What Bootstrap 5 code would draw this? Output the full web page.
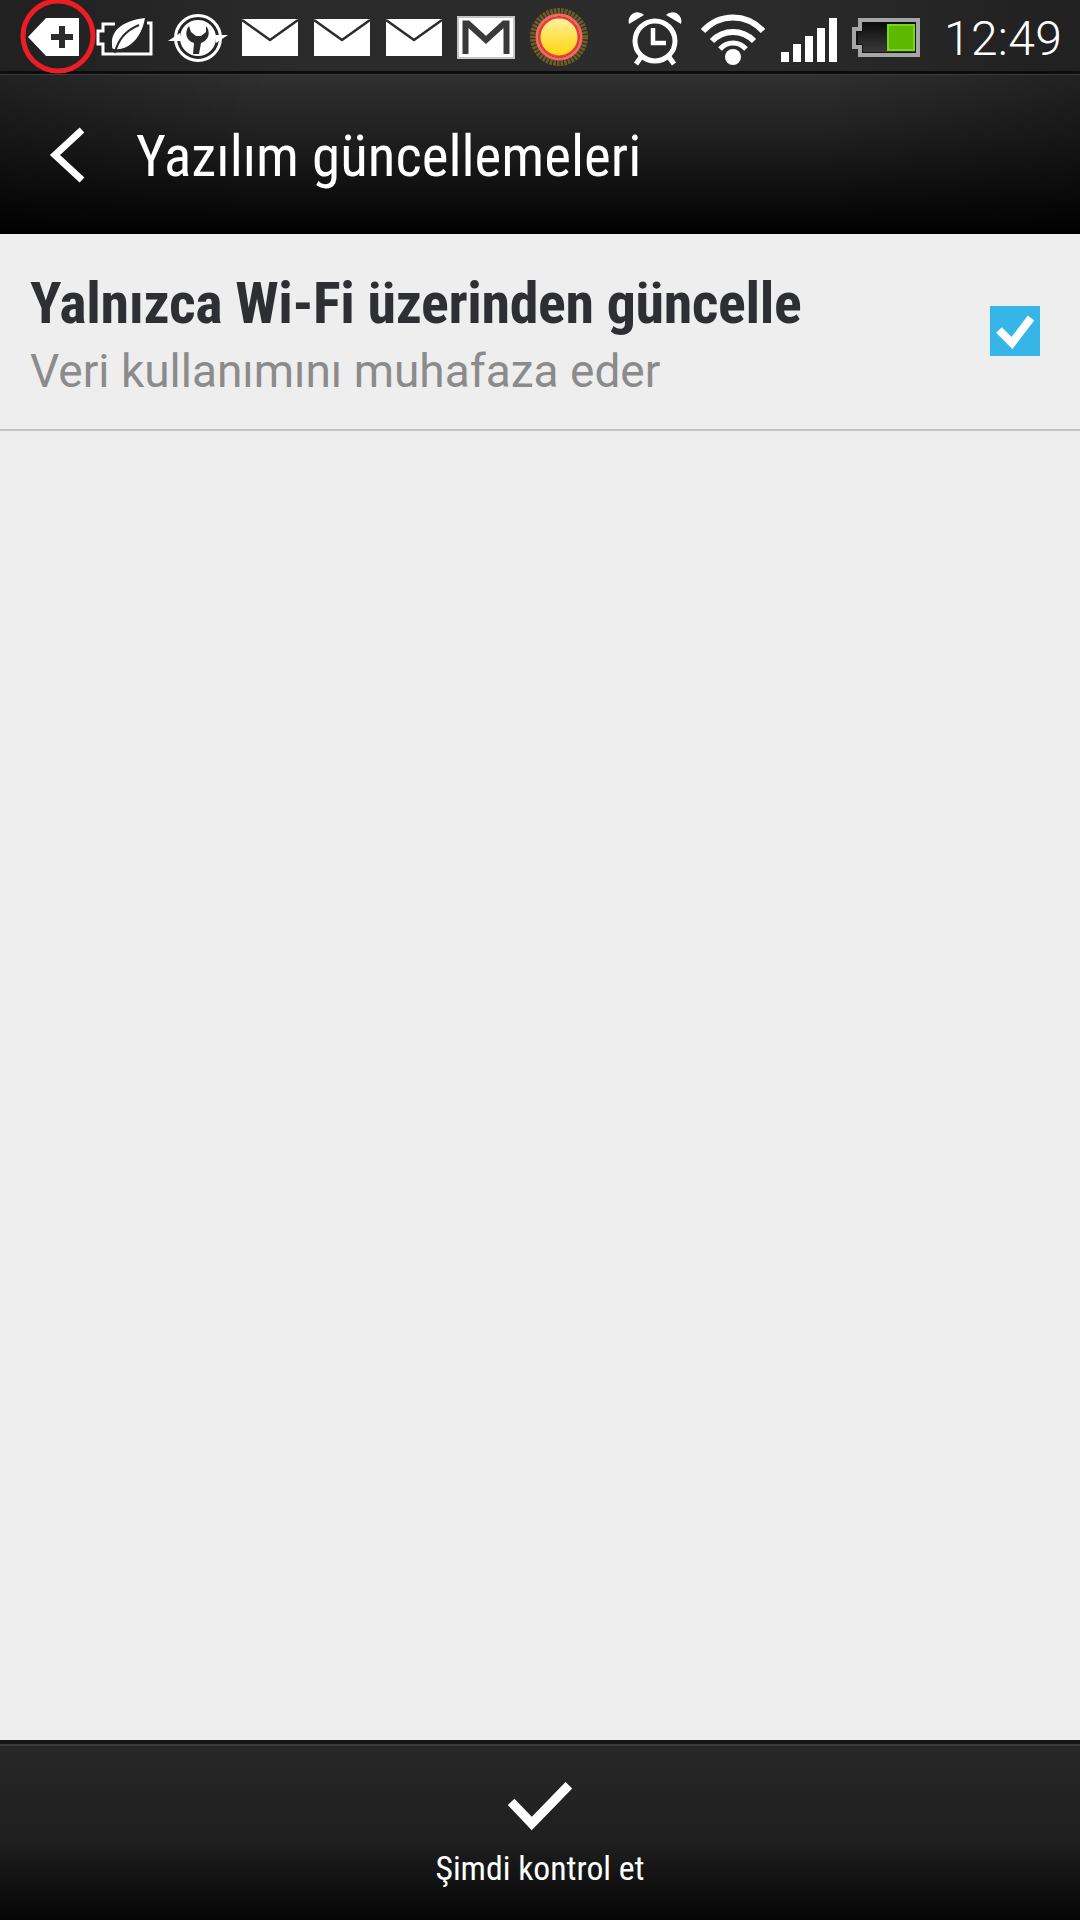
<!DOCTYPE html>
<html lang="en">
<head>
<meta charset="UTF-8">
<title>Yazılım güncellemeleri</title>
<link href="https://cdn.jsdelivr.net/npm/bootstrap@5.3.0/dist/css/bootstrap.min.css" rel="stylesheet">
<style>
    html, body { height: 100%; }
    body {
        width: 1080px;
        height: 1920px;
        overflow: hidden;
        background: #eeeeee;
        font-family: Roboto, "Liberation Sans", sans-serif;
        font-stretch: 75%;
    }
    .status-strip {
        height: 74px;
        flex: none;
        background: linear-gradient(90deg, rgba(0,0,0,.25), rgba(0,0,0,0) 30%, rgba(0,0,0,0) 70%, rgba(0,0,0,.25)), #2b2b2b;
        border-bottom: 3px solid #0c0c0c;
    }
    .status-strip svg { position: absolute; overflow: visible; }
    .clock-text {
        position: absolute;
        left: 944px;
        top: 12px;
        font-size: 48px;
        line-height: 54px;
        font-weight: 300;
        font-stretch: 100%;
        letter-spacing: .3px;
        color: #fff;
    }
    .title-strip {
        height: 160px;
        flex: none;
        padding-left: 49px;
        border-top: 1px solid #3c3c3c;
        background: linear-gradient(90deg, rgba(0,0,0,.3), rgba(0,0,0,0) 25%, rgba(0,0,0,0) 75%, rgba(0,0,0,.3)), linear-gradient(180deg, #303030 0%, #1f1f1f 40%, #060606 90%, #000 100%);
    }
    .title-text {
        margin-left: 50px;
        font-size: 57px;
        color: #fff;
        line-height: 1;
        padding-top: 4px;
        white-space: nowrap;
    }
    .pref-row {
        height: 197px;
        flex: none;
        padding: 36px 32px 0 30px;
        border-bottom: 2px solid #c2c2c2;
    }
    .pref-name {
        font-size: 58px;
        line-height: 66px;
        font-weight: 700;
        letter-spacing: -.37px;
        color: #2e2f32;
        white-space: nowrap;
    }
    .pref-desc {
        font-size: 46px;
        line-height: 58px;
        margin-top: 6px;
        font-stretch: 100%;
        color: #8b8b8b;
        white-space: nowrap;
    }
    .tick-box {
        width: 50px;
        height: 50px;
        margin-top: 36px;
        margin-right: 8px;
        background: #35b5e8;
    }
    .action-strip {
        height: 180px;
        flex: none;
        border-top: 4px solid #151515;
        background: linear-gradient(180deg, #3a3a3a 0, #3a3a3a 2px, #272727 2px, #1f1f1f 55%, #050505 100%);
    }
    .action-text {
        font-size: 33.7px;
        line-height: 40px;
        color: #fff;
        margin-top: 17px;
        margin-bottom: 31px;
    }
</style>
</head>
<body class="d-flex flex-column">

<!-- status bar -->
<div class="status-strip position-relative">
    <!-- add tag -->
    <svg style="left:0;top:0" width="120" height="74" viewBox="0 0 120 74">
        <path d="M28 37 L46 18 H79 V56 H46 Z" fill="#fff"/>
        <path d="M51 37 H73 M62 26 V48" stroke="#2b2b2b" stroke-width="6" fill="none"/>
        <circle cx="58" cy="36" r="35" fill="none" stroke="#ee1c25" stroke-width="5"/>
    </svg>
    <!-- battery saver leaf -->
    <svg style="left:97px;top:18px" width="58" height="38" viewBox="0 0 58 38">
        <path d="M18 6 H6 V13 H1 V26 H6 V36 H54 V5 H50" fill="none" stroke="#fff" stroke-width="3"/>
        <path d="M48 0 C30 2 14 10 15 26 C15 29 15 31 17 31 C30 33 44 22 48 0 Z" fill="#fff"/>
        <path d="M42 7 C30 12 21 20 18 35" fill="none" stroke="#2b2b2b" stroke-width="2"/>
    </svg>
    <!-- update wrench -->
    <svg style="left:168px;top:14px" width="60" height="48" viewBox="0 0 60 48">
        <circle cx="30" cy="24" r="22.5" fill="none" stroke="#fff" stroke-width="3"/>
        <path d="M0 27 L12 19 L13 27 Z M60 21 L48 29 L47 21 Z" fill="#fff"/>
        <circle cx="30" cy="24" r="18" fill="#fff"/>
        <path d="M21 12 C16 18 18 27 26 29 L25 40 H31 L33 29 C41 26 43 18 38 12 V18 L33 22 H28 L23 18 Z" fill="#2b2b2b"/>
    </svg>
    <!-- mail x3 -->
    <svg style="left:242px;top:19px" width="56" height="37" viewBox="0 0 56 37">
        <path d="M0 0 H56 V37 H0 Z" fill="#fff"/><path d="M0 1 L28 21 L56 1" fill="none" stroke="#2b2b2b" stroke-width="2.5"/>
    </svg>
    <svg style="left:314px;top:19px" width="56" height="37" viewBox="0 0 56 37">
        <path d="M0 0 H56 V37 H0 Z" fill="#fff"/><path d="M0 1 L28 21 L56 1" fill="none" stroke="#2b2b2b" stroke-width="2.5"/>
    </svg>
    <svg style="left:386px;top:19px" width="56" height="37" viewBox="0 0 56 37">
        <path d="M0 0 H56 V37 H0 Z" fill="#fff"/><path d="M0 1 L28 21 L56 1" fill="none" stroke="#2b2b2b" stroke-width="2.5"/>
    </svg>
    <!-- gmail -->
    <svg style="left:457px;top:16px" width="58" height="43" viewBox="0 0 58 43">
        <rect x="1" y="1" width="56" height="41" fill="#fff" stroke="#c4c4c4" stroke-width="2"/>
        <path d="M8.5 38 V7.5 H11 L29 24 L47 7.5 H49.5 V38" fill="none" stroke="#3a3a3a" stroke-width="6"/>
    </svg>
    <!-- weather sun -->
    <svg style="left:530px;top:8px" width="58" height="58" viewBox="0 0 58 58">
        <defs>
            <linearGradient id="sunFill" x1="0" y1="0" x2="0" y2="1">
                <stop offset="0" stop-color="#fff2a0"/>
                <stop offset="0.55" stop-color="#ffe04a"/>
                <stop offset="1" stop-color="#ffd80c"/>
            </linearGradient>
        </defs>
        <circle cx="29" cy="29" r="25" fill="none" stroke="#6f5c22" stroke-width="8" stroke-dasharray="2.5 1"/>
        <circle cx="29" cy="29" r="22" fill="none" stroke="#ef6a6a" stroke-width="3"/>
        <circle cx="29" cy="29" r="19.5" fill="url(#sunFill)" stroke="#f23a32" stroke-width="2"/>
    </svg>
    <!-- alarm -->
    <svg style="left:628px;top:11px" width="54" height="54" viewBox="0 0 54 54">
        <circle cx="27" cy="30" r="20" fill="none" stroke="#fff" stroke-width="5"/>
        <path d="M1 13 A9 9 0 0 1 16 4 Z M53 13 A9 9 0 0 0 38 4 Z" fill="#fff"/>
        <path d="M13 46 L8 53 M41 46 L46 53" stroke="#fff" stroke-width="5" fill="none"/>
        <path d="M25 17 V32 H38" fill="none" stroke="#fff" stroke-width="4.5"/>
    </svg>
    <!-- wifi -->
    <svg style="left:700px;top:11px" width="66" height="54" viewBox="0 0 66 54">
        <path d="M3 20 C20 2 46 2 63 20" fill="none" stroke="#fff" stroke-width="6"/>
        <path d="M12 30 C24 18 42 18 54 30" fill="none" stroke="#fff" stroke-width="6"/>
        <path d="M20 38 C27 30 39 30 46 38" fill="none" stroke="#fff" stroke-width="5"/>
        <circle cx="33" cy="46" r="8" fill="#fff"/>
    </svg>
    <!-- signal -->
    <svg style="left:782px;top:18px" width="56" height="44" viewBox="0 0 56 44">
        <path d="M0 34 H8 V44 H0 Z M12 26 H20 V44 H12 Z M24 18 H32 V44 H24 Z M36 10 H44 V44 H36 Z M48 0 H56 V44 H48 Z" fill="#fff" transform="translate(-1 0)"/>
    </svg>
    <!-- battery -->
    <svg style="left:852px;top:18px" width="68" height="39" viewBox="0 0 68 39">
        <defs>
            <linearGradient id="cellFill" x1="0" y1="0" x2="0" y2="1">
                <stop offset="0" stop-color="#0c0c0c"/>
                <stop offset="1" stop-color="#3a3a3a"/>
            </linearGradient>
        </defs>
        <path d="M8 2 H66 V37 H8 V29 H2 V11 H8 Z" fill="#111" stroke="#a6a6a6" stroke-width="4"/>
        <path d="M11 5 H63 V34 H11 V26 H6 V14 H11 Z" fill="url(#cellFill)"/>
        <rect x="36" y="7" width="26" height="25" fill="#5cb800" stroke="#7ad61a" stroke-width="2"/>
    </svg>
    <span class="clock-text">12:49</span>
</div>

<!-- title -->
<div class="title-strip d-flex align-items-center">
    <svg width="37" height="56" viewBox="0 0 37 56">
        <path d="M33 3 L6 28 L33 53" fill="none" stroke="#fff" stroke-width="7"/>
    </svg>
    <div class="title-text">Yazılım güncellemeleri</div>
</div>

<!-- preference -->
<div class="pref-row d-flex justify-content-between">
    <div>
        <div class="pref-name">Yalnızca Wi-Fi üzerinden güncelle</div>
        <div class="pref-desc">Veri kullanımını muhafaza eder</div>
    </div>
    <div class="tick-box d-flex align-items-center justify-content-center">
        <svg width="40" height="36" viewBox="0 0 40 36">
            <path d="M4 17 L17 30 L36 5" fill="none" stroke="#fff" stroke-width="8"/>
        </svg>
    </div>
</div>

<div class="flex-grow-1"></div>

<!-- action -->
<div class="action-strip d-flex flex-column align-items-center">
    <svg class="mt-auto" width="66" height="50" viewBox="0 0 64 48">
        <path d="M4 19 L24 40 L60 3" fill="none" stroke="#fff" stroke-width="9"/>
    </svg>
    <div class="action-text">Şimdi kontrol et</div>
</div>

<script src="https://cdn.jsdelivr.net/npm/bootstrap@5.3.0/dist/js/bootstrap.bundle.min.js"></script>
</body>
</html>
